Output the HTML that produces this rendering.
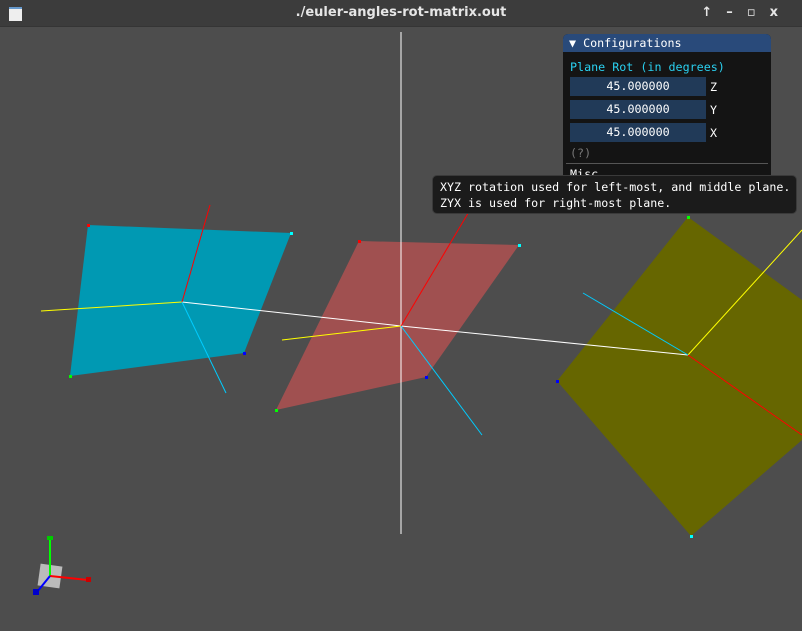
<!DOCTYPE html><html><head><style>
body{margin:0;width:802px;height:631px;overflow:hidden;background:#4d4d4d;font-family:"DejaVu Sans Mono","Liberation Mono",monospace;position:relative}
.tb{position:absolute;left:0;top:0;width:802px;height:26px;background:#3c3c3c;border-bottom:1px solid #353535;color:#e6e6e6;font:bold 13px "DejaVu Sans","Liberation Sans",sans-serif;text-align:center;line-height:25px}
.panel{position:absolute;left:563px;top:34px;width:208px;height:150px;background:#141414;border-radius:5px 5px 0 0;overflow:hidden;font-size:11.7px}
.hd{background:#294a7a;height:18px;line-height:18px;color:#fff;padding-left:6px}
.in{position:absolute;left:7px;width:136px;height:19px;background:#213a58;color:#fff;text-align:center;line-height:19px}
.lb{position:absolute;left:147px;color:#fff}
.tip{position:absolute;left:432px;top:175px;width:365px;height:39px;background:#1b1b1b;border:1px solid #3a3a3a;border-radius:5px;color:#fff;font-size:11.65px;line-height:16px;padding:3px 0 0 7px;box-sizing:border-box;white-space:nowrap}
</style></head><body>
<div class="tb"><span style="position:absolute;left:9px;top:7px;width:13px;height:12px;background:#eee;border-top:2px solid #69c"></span>./euler-angles-rot-matrix.out<span style="position:absolute;right:10px;top:0;letter-spacing:14px">↑–▫x</span></div>
<svg width="802" height="631" style="position:absolute;left:0;top:0">
<polygon points="88,225 291,233 244,353 70,376" fill="#0099b3"/>
<polygon points="359,241 519,245 426,377 276,410" fill="#a05050"/>
<polygon points="688,217 802,300 802,440 691,536 557,381" fill="#666600"/>
<line x1="401" y1="32" x2="401" y2="534" stroke="#fff"/>
<polyline points="41,311 182,302" stroke="#ff0" fill="none"/>
<polyline points="182,302 401,326 688,355" stroke="#fff" fill="none"/>
<line x1="282" y1="340" x2="401" y2="326" stroke="#ff0"/>
<line x1="688" y1="355" x2="802" y2="230" stroke="#ff0"/>
<line x1="182" y1="302" x2="210" y2="205" stroke="#f00"/>
<line x1="401" y1="326" x2="470" y2="210" stroke="#f00"/>
<line x1="688" y1="355" x2="802" y2="435" stroke="#f00"/>
<line x1="182" y1="302" x2="226" y2="393" stroke="#0cf"/>
<line x1="401" y1="326" x2="482" y2="435" stroke="#0cf"/>
<line x1="688" y1="355" x2="583" y2="293" stroke="#0cf"/>
<g>
<rect x="87" y="224" width="3" height="3" fill="#f00"/><rect x="290" y="232" width="3" height="3" fill="#0ff"/><rect x="243" y="352" width="3" height="3" fill="#00f"/><rect x="69" y="375" width="3" height="3" fill="#0f0"/>
<rect x="358" y="240" width="3" height="3" fill="#f00"/><rect x="518" y="244" width="3" height="3" fill="#0ff"/><rect x="425" y="376" width="3" height="3" fill="#00f"/><rect x="275" y="409" width="3" height="3" fill="#0f0"/>
<rect x="687" y="216" width="3" height="3" fill="#0f0"/><rect x="556" y="380" width="3" height="3" fill="#00f"/><rect x="690" y="535" width="3" height="3" fill="#0ff"/>
</g>
<rect x="39" y="565" width="22" height="22" fill="#bbb" transform="rotate(8 50 576)"/>
<line x1="50" y1="576" x2="50" y2="538" stroke="#0f0" stroke-width="2"/><rect x="47" y="536" width="6" height="4" fill="#0c0"/>
<line x1="50" y1="576" x2="88" y2="580" stroke="#f00" stroke-width="2"/><rect x="86" y="577" width="5" height="5" fill="#c00"/>
<line x1="50" y1="576" x2="37" y2="592" stroke="#00f" stroke-width="2"/><rect x="33" y="589" width="6" height="6" fill="#00c"/>
</svg>
<div class="panel"><div class="hd">▼ Configurations</div>
<div style="position:absolute;left:7px;top:26px;color:#2ad0f0">Plane Rot (in degrees)</div>
<div class="in" style="top:43px">45.000000</div><div class="lb" style="top:46px">Z</div>
<div class="in" style="top:66px">45.000000</div><div class="lb" style="top:69px">Y</div>
<div class="in" style="top:89px">45.000000</div><div class="lb" style="top:92px">X</div>
<div style="position:absolute;left:7px;top:112px;color:#777">(?)</div>
<div style="position:absolute;left:3px;top:129px;width:202px;border-top:1px solid #555"></div>
<div style="position:absolute;left:7px;top:133px;color:#fff">Misc</div></div>
<div class="tip">XYZ rotation used for left-most, and middle plane.<br>ZYX is used for right-most plane.</div>
</body></html>
